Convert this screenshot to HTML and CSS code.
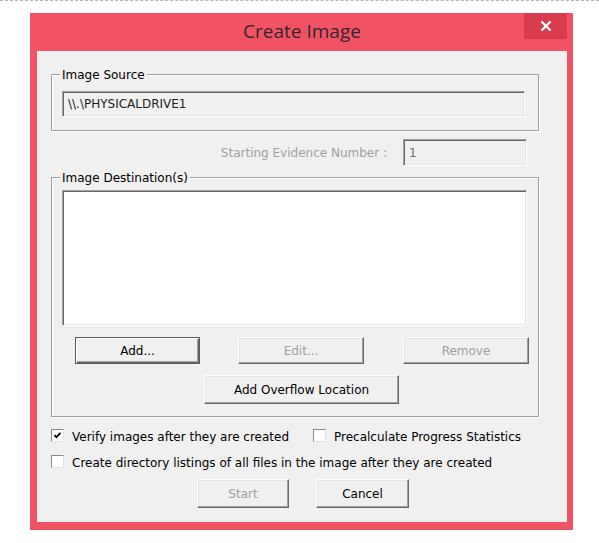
FILE: index.html
```html
<!DOCTYPE html>
<html>
<head>
<meta charset="utf-8">
<link rel="stylesheet" href="styles.css">
</head>
<body>
<div class="topline"></div>
<div class="window">
  <div class="titlebar">
    <div class="title">Create Image</div>
    <div class="close">
      <svg width="12" height="12" viewBox="0 0 12 12"><path d="M1.5 1.5 L10.5 10.5 M10.5 1.5 L1.5 10.5" stroke="#fff" stroke-width="2.4" fill="none"/></svg>
    </div>
  </div>
  <div class="client">
    <div class="group group-source">
      <span class="legend">Image Source</span>
      <div class="field field-source">\\.\PHYSICALDRIVE1</div>
    </div>
    <div class="evidence-row">
      <span class="disabled-label">Starting Evidence Number :</span>
      <div class="field field-evidence">1</div>
    </div>
    <div class="group group-dest">
      <span class="legend">Image Destination(s)</span>
      <div class="listbox"></div>
      <div class="dest-buttons">
        <div class="btn btn-default btn-add">Add...</div>
        <div class="btn btn-disabled btn-edit">Edit...</div>
        <div class="btn btn-disabled btn-remove">Remove</div>
      </div>
      <div class="btn btn-overflow">Add Overflow Location</div>
    </div>
    <div class="check-row row-one">
      <label class="check check-verify"><span class="box"><svg width="11" height="11" viewBox="0 0 11 11"><path d="M2.5 5.2 L4.4 7.2 L8.5 2.8" stroke="#000" stroke-width="1.7" fill="none"/></svg></span><span class="check-text">Verify images after they are created</span></label>
      <label class="check check-precalc"><span class="box"></span><span class="check-text">Precalculate Progress Statistics</span></label>
    </div>
    <div class="check-row row-two">
      <label class="check"><span class="box"></span><span class="check-text">Create directory listings of all files in the image after they are created</span></label>
    </div>
    <div class="bottom-buttons">
      <div class="btn btn-disabled btn-start">Start</div>
      <div class="btn btn-cancel">Cancel</div>
    </div>
  </div>
</div>
</body>
</html>
```
FILE: styles.css
```css
html, body {
  margin: 0;
  padding: 0;
  background: #ffffff;
}
body {
  width: 599px;
  height: 543px;
  overflow: hidden;
  font-family: "DejaVu Sans", sans-serif;
  font-size: 12px;
  color: #000;
}
.topline {
  height: 0;
  border-top: 1px dashed #b4b4b4;
}
.window {
  margin: 12px 0 0 30px;
  width: 543px;
  height: 517px;
  box-sizing: border-box;
  background: #f15364;
  padding: 0 6px 8px 7px;
}
.titlebar {
  position: relative;
  height: 38px;
}
.title {
  text-align: center;
  font-family: "Open Sans", "Noto Sans", sans-serif;
  font-size: 19px;
  line-height: 36px;
  color: #35272b;
}
.close {
  position: absolute;
  top: 0;
  right: 0;
  width: 43px;
  height: 26px;
  background: #d83c4e;
  display: flex;
  align-items: center;
  justify-content: center;
}
.client {
  background: #f0f0f0;
  height: 471px;
  box-sizing: border-box;
  padding: 23px 0 0 14px;
}
.group {
  position: relative;
  width: 488px;
  box-sizing: border-box;
  border: 1px solid #a0a0a0;
  box-shadow: inset 1px 1px 0 #fff, 1px 1px 0 #fff;
}
.legend {
  position: absolute;
  top: -7px;
  left: 8px;
  padding: 0 2px;
  background: #f0f0f0;
  line-height: 14px;
}
.group-source {
  height: 57px;
  padding: 16px 0 0 10px;
}
.field {
  box-sizing: border-box;
  background: #f0f0f0;
  border-top: 1px solid #a0a0a0;
  border-left: 1px solid #a0a0a0;
  border-right: 1px solid #fff;
  border-bottom: 1px solid #fff;
  box-shadow: inset 1px 1px 0 #696969, inset -1px -1px 0 #e3e3e3;
  padding: 0 5px;
  display: flex;
  align-items: center;
}
.field-source {
  width: 463px;
  height: 26px;
  color: #1e1e1e;
}
.evidence-row {
  margin-top: 8px;
  width: 476px;
  display: flex;
  justify-content: flex-end;
  align-items: center;
  gap: 16px;
}
.disabled-label {
  color: #a0a0a0;
}
.field-evidence {
  width: 124px;
  height: 27px;
  color: #6d6d6d;
}
.group-dest {
  margin-top: 11px;
  height: 240px;
  padding: 12px 0 0 10px;
}
.listbox {
  width: 465px;
  height: 136px;
  box-sizing: border-box;
  background: #fff;
  border-top: 1px solid #a0a0a0;
  border-left: 1px solid #a0a0a0;
  border-right: 1px solid #fff;
  border-bottom: 1px solid #fff;
  box-shadow: inset 1px 1px 0 #696969, inset -1px -1px 0 #e3e3e3;
}
.btn {
  box-sizing: border-box;
  display: flex;
  align-items: center;
  justify-content: center;
  background: #f0f0f0;
  border-top: 1px solid #fff;
  border-left: 1px solid #fff;
  border-right: 1px solid #696969;
  border-bottom: 1px solid #696969;
  box-shadow: inset -1px -1px 0 #a0a0a0, inset 1px 1px 0 #e3e3e3;
  color: #000;
}
.btn-disabled {
  color: #a0a0a0;
}
.btn-default {
  border: 1px solid #5a5a5a;
  box-shadow: inset 1px 1px 0 #fff, inset -1px -1px 0 #696969, inset -2px -2px 0 #a0a0a0;
}
.dest-buttons {
  margin-top: 11px;
  display: flex;
  height: 27px;
}
.btn-add {
  margin-left: 13px;
  width: 125px;
}
.btn-edit {
  margin-left: 38px;
  width: 126px;
}
.btn-remove {
  margin-left: 39px;
  width: 126px;
}
.btn-overflow {
  margin: 11px 0 0 142px;
  width: 195px;
  height: 29px;
}
.check-row {
  display: flex;
  height: 13px;
  align-items: center;
}
.row-one {
  margin-top: 12px;
}
.row-two {
  margin-top: 13px;
}
.check {
  display: flex;
  align-items: center;
  gap: 8px;
  white-space: nowrap;
}
.check-text {
  padding-top: 2px;
}
.check-verify {
  width: 262px;
}
.box {
  width: 13px;
  height: 13px;
  box-sizing: border-box;
  background: #fff;
  border-top: 1px solid #8a8a8a;
  border-left: 1px solid #8a8a8a;
  border-right: 1px solid #e2e2e2;
  border-bottom: 1px solid #e2e2e2;
  display: flex;
  align-items: center;
  justify-content: center;
  flex-shrink: 0;
}
.bottom-buttons {
  margin-top: 11px;
  display: flex;
  height: 29px;
}
.btn-start {
  margin-left: 146px;
  width: 92px;
}
.btn-cancel {
  margin-left: 27px;
  width: 93px;
}
```
